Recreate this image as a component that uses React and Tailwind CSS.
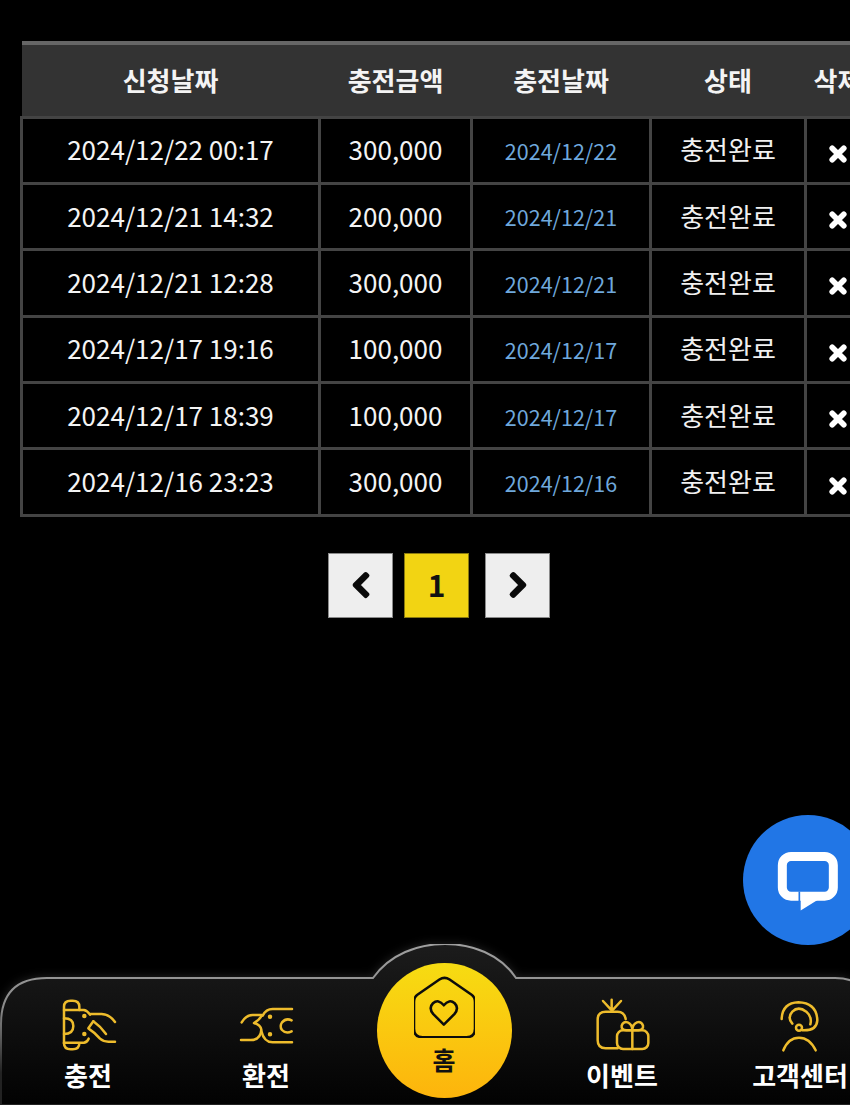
import { FaChevronLeft, FaChevronRight } from "react-icons/fa";

const ROWS = [
  ["2024/12/22 00:17", "300,000", "2024/12/22"],
  ["2024/12/21 14:32", "200,000", "2024/12/21"],
  ["2024/12/21 12:28", "300,000", "2024/12/21"],
  ["2024/12/17 19:16", "100,000", "2024/12/17"],
  ["2024/12/17 18:39", "100,000", "2024/12/17"],
  ["2024/12/16 23:23", "300,000", "2024/12/16"],
];

const headCell = "pb-[2px] text-center text-[26px] font-bold text-[#f4f4f4]";
const bodyCell = "h-[66.4px] border-[3px] border-[#444444] p-0 text-center";

function NavIcon({ viewBox, children }) {
  return (
    <svg
      viewBox={viewBox}
      className="h-[60px] w-20"
      fill="none"
      stroke="#eebc2c"
      strokeWidth="7.5"
      strokeLinecap="round"
      strokeLinejoin="round"
    >
      {children}
    </svg>
  );
}

function ChargeIcon() {
  return (
    <NavIcon viewBox="-6 15 240 180">
      <path d="M42 160V50Q42 32 62 32H68Q88 32 88 50V60" />
      <path d="M42 60H102Q112 62 120 74" />
      <path d="M42 158H102Q112 156 116 146" />
      <path d="M42 160Q42 178 62 178H68Q88 178 88 160" />
      <path d="M42 85Q70 85 70 108Q70 132 42 132" />
      <path d="M122 72H155Q180 74 195 96" />
      <path d="M130 94Q150 108 168 132" />
      <path d="M130 94 115 115Q135 128 150 146Q160 155 175 155H195" />
      <circle cx="103" cy="78" r="3" fill="#eebc2c" />
      <circle cx="103" cy="132" r="3" fill="#eebc2c" />
    </NavIcon>
  );
}

function ExchangeIcon() {
  return (
    <NavIcon viewBox="-12 0 240 180">
      <path d="M186 42H128Q108 42 98 62" />
      <path d="M35 82Q48 60 68 60H95Q92 72 72 84Q92 90 94 104Q92 135 62 135H33" />
      <path d="M94 108Q102 142 128 142H186" />
      <path d="M185 76Q168 68 156 82Q148 94 156 105Q168 118 185 109" />
      <circle cx="120" cy="65" r="3" fill="#eebc2c" />
      <circle cx="120" cy="118" r="3" fill="#eebc2c" />
    </NavIcon>
  );
}

function EventIcon() {
  return (
    <NavIcon viewBox="-9 0 240 180">
      <path d="M122 72Q118 50 98 50H62Q38 50 38 74V136Q38 160 62 160H98" />
      <path d="M54 18 80 46M108 18 82 46M80 14V46" />
      <rect x="96" y="106" width="94" height="56" rx="18" />
      <path d="M142 106V162" />
      <path d="M142 106H124Q108 104 110 92Q114 78 128 82Q142 88 142 106Q142 88 156 82Q170 78 174 92Q176 104 160 106H142" />
    </NavIcon>
  );
}

function SupportIcon() {
  return (
    <NavIcon viewBox="-15 0 240 180">
      <path d="M50 72Q52 24 100 22Q155 24 157 76Q155 108 112 106" />
      <path d="M82 86Q66 68 82 50Q100 32 124 50Q142 66 136 88" />
      <circle cx="102" cy="98" r="9" />
      <path d="M55 166Q70 128 102 128Q134 128 152 166" />
    </NavIcon>
  );
}

function HomeIcon() {
  return (
    <svg
      viewBox="150 110 180 182"
      className="h-[62px] w-[61px]"
      fill="none"
      stroke="#0c0c0c"
      strokeWidth="7.5"
      strokeLinejoin="round"
    >
      <path d="M225 120 160 165Q150 172 150 186V265Q150 290 175 290H305Q330 290 330 265V186Q330 172 320 165L255 120Q240 110 225 120Z" />
      <path d="M238 253 207 222Q192 204 206 190Q222 176 238 196Q254 176 270 190Q284 204 269 222Z" />
    </svg>
  );
}

function DeleteIcon() {
  return (
    <svg viewBox="0 0 18 18" className="mx-auto mt-[7px] h-[18px] w-[18px]">
      <path d="M3.2 3.2 14.8 14.8M14.8 3.2 3.2 14.8" stroke="#ffffff" strokeWidth="5.6" strokeLinecap="round" />
    </svg>
  );
}

function NavItem({ icon, label }) {
  return (
    <div className="flex flex-col items-center">
      {icon}
      <span className="mt-[2px] text-[26px] leading-9 font-bold whitespace-nowrap text-white">
        {label}
      </span>
    </div>
  );
}

export default function App() {
  return (
    <div className="relative h-[1105px] w-[850px] overflow-hidden bg-black font-['Noto_Sans_CJK_KR','Noto_Sans',sans-serif]">
      <div className="pt-[41px] pl-[20px]">
        <table className="w-[848px] table-fixed border-collapse">
          <colgroup>
            <col className="w-[298px]" />
            <col className="w-[152px]" />
            <col className="w-[179px]" />
            <col className="w-[155px]" />
            <col className="w-[64px]" />
          </colgroup>
          <thead>
            <tr className="h-[74px] border-t-4 border-[#666666] bg-[#333333]">
              <th className={headCell}>신청날짜</th>
              <th className={headCell}>충전금액</th>
              <th className={headCell}>충전날짜</th>
              <th className={headCell}>상태</th>
              <th className={headCell}>삭제</th>
            </tr>
          </thead>
          <tbody>
            {ROWS.map((row) => (
              <tr key={row[0]}>
                <td className={`${bodyCell} pb-[3px] text-[26px] text-[#f4f4f4]`}>{row[0]}</td>
                <td className={`${bodyCell} pb-[3px] text-[26px] text-[#f4f4f4]`}>{row[1]}</td>
                <td className={`${bodyCell} pt-[2px] text-[21.5px] text-[#6fa8dc]`}>{row[2]}</td>
                <td className={`${bodyCell} pb-[3px] text-[26px] text-[#f0f0f0]`}>충전완료</td>
                <td className={bodyCell}>
                  <DeleteIcon />
                </td>
              </tr>
            ))}
          </tbody>
        </table>
      </div>

      <div className="mt-[36px] ml-[328px] flex">
        <button className="flex h-[65px] w-[65px] items-center justify-center border border-[#8a8a8a] bg-[#eeeeee] text-[28px] text-[#0a0a0a]">
          <FaChevronLeft stroke="currentColor" strokeWidth={40} />
        </button>
        <button className="ml-[11px] flex h-[65px] w-[65px] items-center justify-center border border-[#8a7a10] bg-[#f2d413] pb-[2px] text-[30px] font-bold text-[#111111]">
          1
        </button>
        <button className="ml-[16px] flex h-[65px] w-[65px] items-center justify-center border border-[#8a8a8a] bg-[#eeeeee] text-[28px] text-[#0a0a0a]">
          <FaChevronRight stroke="currentColor" strokeWidth={40} />
        </button>
      </div>

      {/* chat bubble */}
      <div className="absolute top-[815px] left-[743px] flex h-[130px] w-[130px] items-center justify-center rounded-full bg-[#2176e6]">
        <svg viewBox="130 145 210 200" className="h-[67px] w-[70px]">
          <rect x="158" y="173" width="153" height="119" rx="26" fill="none" stroke="#ffffff" strokeWidth="27" />
          <path d="M213 335V298H272Z" fill="#ffffff" />
          <path d="M209 278V308" stroke="#2176e6" strokeWidth="5" />
        </svg>
      </div>

      {/* bottom nav */}
      <div className="absolute bottom-0 left-0 h-[161px] w-[850px]">
        <svg
          viewBox="0 0 850 161"
          className="absolute inset-0 h-full w-full drop-shadow-[0_0_5px_rgba(255,255,255,0.14)]"
        >
          <defs>
            <linearGradient id="navFill" x1="0" y1="0" x2="0" y2="1">
              <stop offset="0" stopColor="#1c1c1c" />
              <stop offset="0.3" stopColor="#141414" />
              <stop offset="1" stopColor="#020202" />
            </linearGradient>
            <linearGradient id="navLine" x1="0" y1="0" x2="0" y2="1">
              <stop offset="0" stopColor="#a0a0a0" />
              <stop offset="0.4" stopColor="#8a8a8a" />
              <stop offset="0.8" stopColor="#222222" />
            </linearGradient>
          </defs>
          <path
            d="M1 161V80Q1 34 47 34H373C390 10 418 0 445 0C472 0 500 10 516 34H835Q870 34 870 70V161Z"
            fill="url(#navFill)"
            stroke="url(#navLine)"
            strokeWidth="2"
          />
        </svg>
        <div className="relative -ml-px grid w-[890px] grid-cols-5 pt-[51px]">
          <NavItem icon={<ChargeIcon />} label="충전" />
          <NavItem icon={<ExchangeIcon />} label="환전" />
          <div className="-mt-[32px] flex justify-center">
            <div className="flex h-[135px] w-[135px] flex-col items-center rounded-full bg-gradient-to-b from-[#f6dc12] to-[#fdb40c] pt-[13px]">
              <HomeIcon />
              <span className="mt-[3px] text-[25px] leading-9 font-bold text-[#111111]">홈</span>
            </div>
          </div>
          <NavItem icon={<EventIcon />} label="이벤트" />
          <NavItem icon={<SupportIcon />} label="고객센터" />
        </div>
      </div>
    </div>
  );
}
